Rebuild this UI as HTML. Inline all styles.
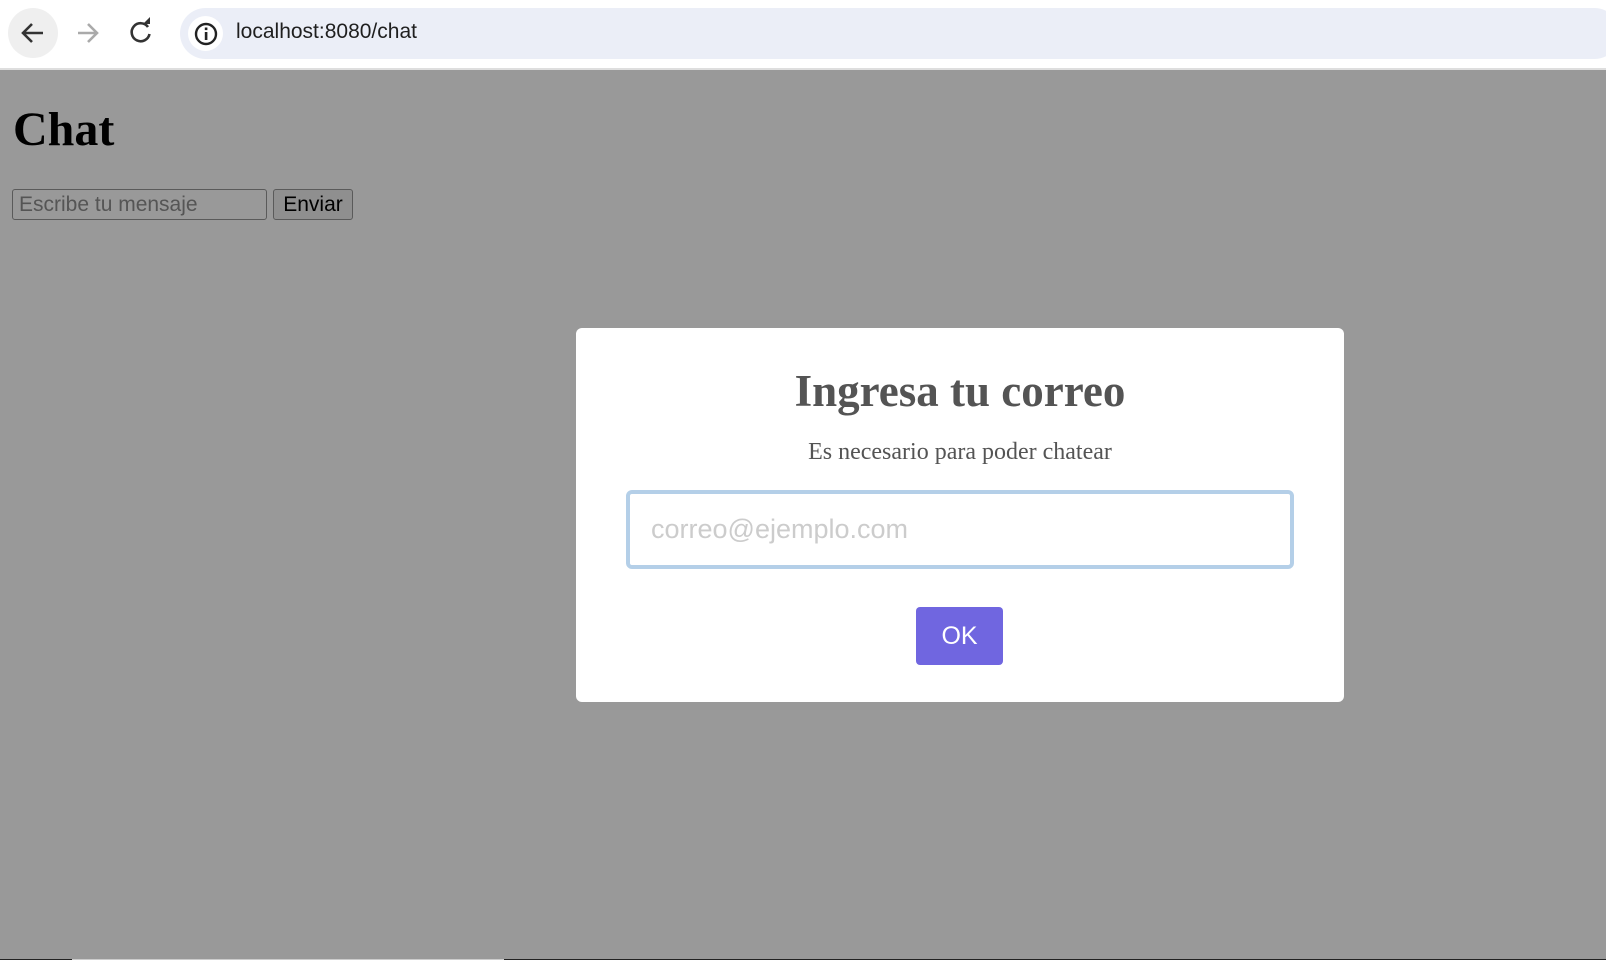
<!DOCTYPE html>
<html><head><meta charset="utf-8"><style>
*{box-sizing:border-box;margin:0;padding:0}
html,body{width:1606px;height:960px;overflow:hidden;background:#999;position:relative;font-family:"Liberation Sans",sans-serif}
.top{position:absolute;left:0;top:0;width:1606px;height:68px;background:#fff}
.sep{position:absolute;left:0;top:68px;width:1606px;height:2px;background:#dedede}
.addr{position:absolute;left:180px;top:8px;width:1440px;height:51px;background:#ebeef7;border-radius:26px}
.info{position:absolute;left:188px;top:16px;width:35px;height:35px;border-radius:50%;background:#fff}
.url{position:absolute;left:236px;top:20px;font-size:21px;color:#1f1f1f}
.back{position:absolute;left:8px;top:8px;width:50px;height:50px;border-radius:50%;background:#efefef}
h1{position:absolute;left:13px;top:102px;font-family:"Liberation Serif",serif;font-size:48px;font-weight:bold;color:#000}
.in{position:absolute;left:12px;top:189px;width:255px;height:31px;border:1px solid #5a5a5a;border-radius:3px;font-size:21px;color:#555;padding:3px 0 0 6px}
.btn{position:absolute;left:273px;top:189px;width:80px;height:31px;border:1px solid #5a5a5a;border-radius:3px;font-size:21px;color:#000;text-align:center;padding-top:3px;background:#8f8f8f}
.modal{position:absolute;left:576px;top:328px;width:768px;height:374px;background:#fff;border-radius:6px}
.t{position:absolute;left:0;width:768px;text-align:center;top:37px;font-family:"Liberation Serif",serif;font-weight:bold;font-size:45px;color:#545454}
.s{position:absolute;left:0;width:768px;text-align:center;top:111px;font-family:"Liberation Serif",serif;font-size:24px;color:#545454}
.em{position:absolute;left:50px;top:162px;width:668px;height:79px;border:4px solid #b4cfe8;border-radius:6px}
.em span{position:absolute;left:21px;top:20px;font-size:27px;color:#ccc}
.ok{position:absolute;left:340px;top:279px;width:87px;height:58px;background:#7066e0;border-radius:4px;color:#fff;font-size:25px;text-align:center;line-height:58px}
.bot{position:absolute;left:0;top:959px;width:1606px;height:1px;background:#222}
</style></head><body>
<div class="top"></div><div class="sep"></div>
<div class="back"></div>
<svg style="position:absolute;left:0;top:0" width="170" height="68">
<path d="M43 33H24M32 24l-9 9 9 9" stroke="#333" stroke-width="2.6" fill="none"/>
<path d="M96 33H78M88 24l9 9-9 9" stroke="#aaa" stroke-width="2.6" fill="none"/>
<path d="M148 27a9 9 0 1 0 1.5 7" stroke="#333" stroke-width="2.6" fill="none"/><path d="M143 24h7v-7z" fill="#333"/>
</svg>
<div class="addr"></div><div class="info"></div>
<svg style="position:absolute;left:193px;top:21px" width="26" height="26"><circle cx="13" cy="13" r="10" stroke="#222" stroke-width="2.4" fill="none"/><rect x="11.8" y="11" width="2.6" height="8" fill="#222"/><rect x="11.8" y="6.5" width="2.6" height="2.6" fill="#222"/></svg>
<div class="url">localhost:8080/chat</div>
<h1>Chat</h1>
<div class="in">Escribe tu mensaje</div>
<div class="btn">Enviar</div>
<div class="modal">
<div class="t">Ingresa tu correo</div>
<div class="s">Es necesario para poder chatear</div>
<div class="em"><span>correo@ejemplo.com</span></div>
<div class="ok">OK</div>
</div>
<div class="bot"></div>
<div style="position:absolute;left:72px;top:959px;width:432px;height:1px;background:#ccc"></div>
</body></html>
